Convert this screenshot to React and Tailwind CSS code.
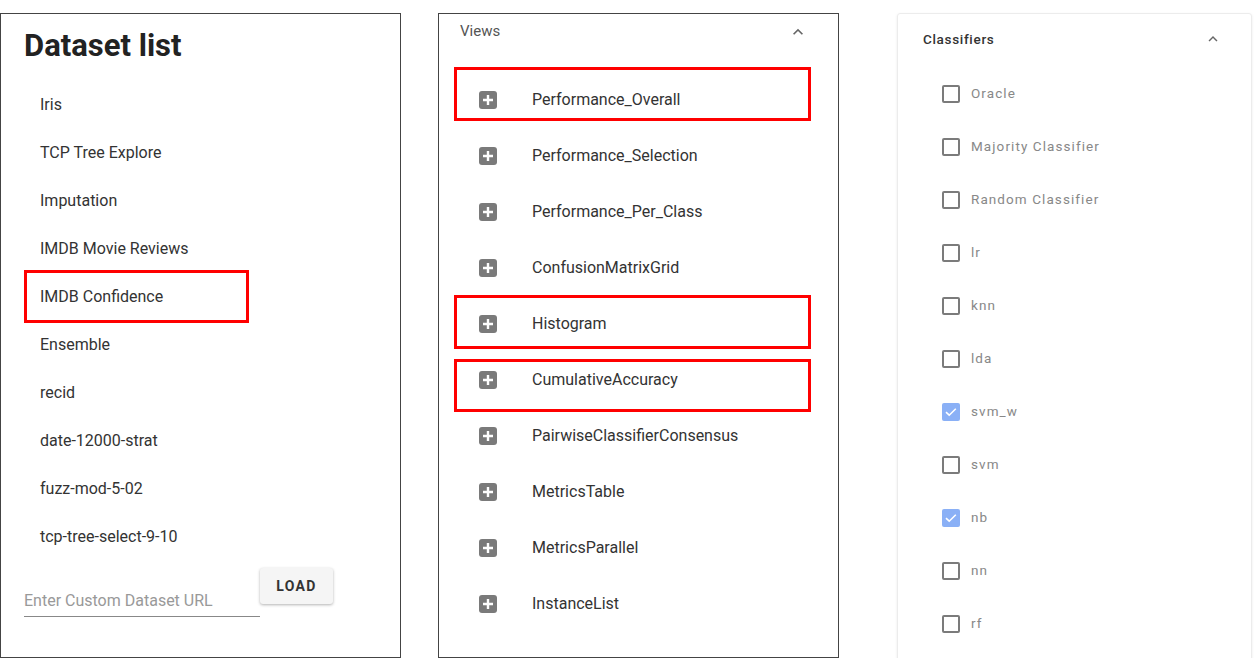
import React from "react";

const datasets = [
    "Iris",
    "TCP Tree Explore",
    "Imputation",
    "IMDB Movie Reviews",
    "IMDB Confidence",
    "Ensemble",
    "recid",
    "date-12000-strat",
    "fuzz-mod-5-02",
    "tcp-tree-select-9-10",
];

const views = [
    "Performance_Overall",
    "Performance_Selection",
    "Performance_Per_Class",
    "ConfusionMatrixGrid",
    "Histogram",
    "CumulativeAccuracy",
    "PairwiseClassifierConsensus",
    "MetricsTable",
    "MetricsParallel",
    "InstanceList",
];

const classifiers = [
    { name: "Oracle", checked: false },
    { name: "Majority Classifier", checked: false },
    { name: "Random Classifier", checked: false },
    { name: "lr", checked: false },
    { name: "knn", checked: false },
    { name: "lda", checked: false },
    { name: "svm_w", checked: true },
    { name: "svm", checked: false },
    { name: "nb", checked: true },
    { name: "nn", checked: false },
    { name: "rf", checked: false },
];

const ChevronUp = ({ className }) => (
    <svg viewBox="0 0 24 24" className={className} fill="currentColor">
        <path d="M7.41 15.41 12 10.83l4.59 4.58L18 14l-6-6-6 6z" />
    </svg>
);

const PlusBox = () => (
    <span className="flex h-[18px] w-[18px] items-center justify-center rounded-[3px] bg-[#7a7a7a]">
        <svg viewBox="0 0 18 18" className="h-[18px] w-[18px]">
            <path d="M9 4v10M4 9h10" stroke="#fff" strokeWidth="2.4" />
        </svg>
    </span>
);

const Checkbox = ({ checked }) =>
    checked ? (
        <span className="flex h-[18px] w-[18px] items-center justify-center rounded-[2px] bg-[#8ab0f6]">
            <svg viewBox="0 0 18 18" className="h-[18px] w-[18px]" fill="none">
                <path d="M4 9.2l3.2 3 6.6-6.4" stroke="#fff" strokeWidth="1.6" />
            </svg>
        </span>
    ) : (
        <span className="block h-[18px] w-[18px] rounded-[2px] border-2 border-[#7b7b7b]" />
    );

const RedBox = ({ className }) => (
    <div className={`pointer-events-none absolute border-[3px] border-[#ff0000] ${className}`} />
);

export default function App() {
    return (
        <div className="flex h-[658px] w-[1255px] overflow-hidden bg-white pt-[13px] font-['Roboto',sans-serif] text-[#333]">
            {/* dataset list */}
            <div className="relative h-[645px] w-[401px] shrink-0 border border-[#444]">
                <h1 className="pl-[23px] pt-[15px] text-[31px] font-bold leading-[34px] text-[#222]">Dataset list</h1>
                <ul className="mt-[18px]">
                    {datasets.map((name) => (
                        <li key={name} className="flex h-12 items-center pl-[39px] text-[16px] text-[#333]">
                            {name}
                        </li>
                    ))}
                </ul>
                <div className="mt-[8px] flex items-start pl-[23px]">
                    <div className="mt-[20px] w-[236px] border-b border-[#888] pb-[3px] text-[16px] leading-[24px] text-[#999]">
                        Enter Custom Dataset URL
                    </div>
                    <button className="-mt-px h-9 w-[73px] rounded-[3px] bg-[#f5f5f5] text-[14px] font-bold tracking-[0.1em] text-[#333] shadow-[0_1px_3px_rgba(0,0,0,0.3)]">
                        LOAD
                    </button>
                </div>
                <RedBox className="left-[23px] top-[256px] h-[53px] w-[225px]" />
            </div>

            {/* views */}
            <div className="relative ml-[37px] h-[645px] w-[401px] shrink-0 border border-[#444]">
                <div className="flex h-[35px] items-center justify-between pl-[21px] pr-[30px]">
                    <span className="text-[15px] text-[#555]">Views</span>
                    <ChevronUp className="h-5 w-5 text-[#666]" />
                </div>
                <ul className="mt-[23px]">
                    {views.map((name) => (
                        <li key={name} className="flex h-14 items-center pl-10">
                            <PlusBox />
                            <span className="ml-[35px] text-[16px] text-[#333]">{name}</span>
                        </li>
                    ))}
                </ul>
                <RedBox className="left-[15px] top-[53px] h-[54px] w-[357px]" />
                <RedBox className="left-[15px] top-[281px] h-[54px] w-[357px]" />
                <RedBox className="left-[15px] top-[345px] h-[53px] w-[357px]" />
            </div>

            {/* classifiers */}
            <div className="ml-[58px] h-[660px] w-[355px] shrink-0 rounded-t-[3px] border border-[#ececec] shadow-[0_1px_3px_rgba(0,0,0,0.08)]">
                <div className="flex h-[50px] items-center justify-between pl-[25px] pr-[29px]">
                    <span className="text-[13.5px] font-medium tracking-[0.05em] text-[#333]">Classifiers</span>
                    <ChevronUp className="h-[18px] w-[18px] text-[#666]" />
                </div>
                <ul className="mt-[3px]">
                    {classifiers.map((c) => (
                        <li key={c.name} className="flex h-[53px] items-center pl-11">
                            <Checkbox checked={c.checked} />
                            <span className="ml-[11px] text-[13.5px] tracking-[0.08em] text-[#888]">{c.name}</span>
                        </li>
                    ))}
                </ul>
            </div>
        </div>
    );
}
